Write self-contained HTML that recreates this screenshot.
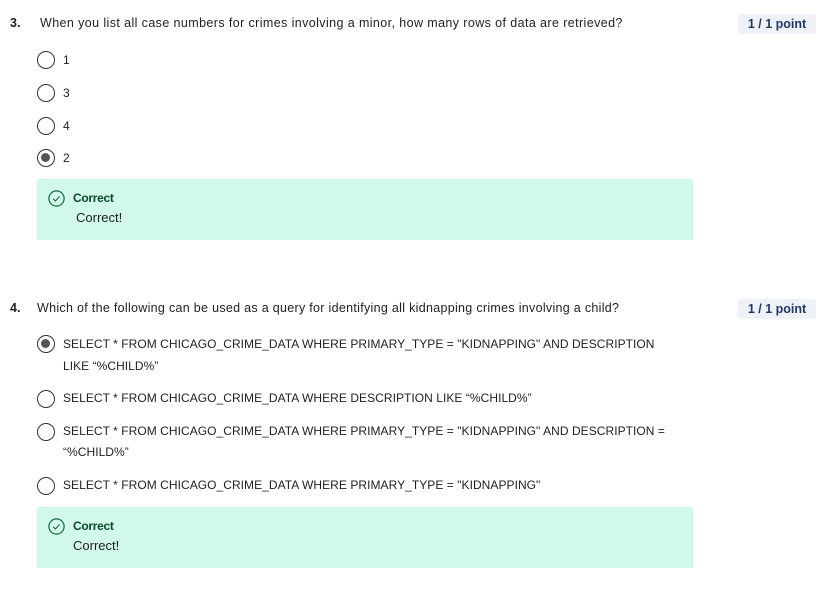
<!DOCTYPE html>
<html><head><meta charset="utf-8"><style>
*{margin:0;padding:0;box-sizing:border-box}
body{width:840px;height:612px;background:#fff;font-family:"Liberation Sans",sans-serif;color:#1f1f1f;position:relative;overflow:hidden}
.a{position:absolute;white-space:nowrap}
.q{font-size:12.5px;letter-spacing:0.4px}
.num{font-weight:bold;font-size:12.5px}
.badge{position:absolute;left:738px;width:78px;height:20px;background:#eef2f8;border-radius:3px;color:#1f3a68;font-size:12.5px;font-weight:bold;text-align:center;line-height:20px}
.r{position:absolute;width:18px;height:18px;border:1.5px solid #333;border-radius:50%}
.r.s::after{content:"";position:absolute;left:3px;top:3px;width:9px;height:9px;border-radius:50%;background:#555}
.opt{font-size:12px;letter-spacing:0.05px}
.fb{position:absolute;left:37px;width:656px;height:61px;background:#d2f7eb}
.ck{position:absolute;left:11px;top:11px;width:17px;height:17px}
.fb .t{position:absolute;left:36px;top:12px;font-size:12px;font-weight:bold;color:#0b4a2b;letter-spacing:-0.3px}
.fb .m{position:absolute;top:31px;font-size:13px;letter-spacing:0px}
</style></head><body>
<div class="a num" style="left:10px;top:16px">3.</div>
<div class="a q" style="left:40px;top:16px">When you list all case numbers for crimes involving a minor, how many rows of data are retrieved?</div>
<div class="badge" style="top:14px">1 / 1 point</div>
<div class="r" style="left:37px;top:51px"></div><div class="a opt" style="left:63px;top:53px">1</div>
<div class="r" style="left:37px;top:84px"></div><div class="a opt" style="left:63px;top:86px">3</div>
<div class="r" style="left:37px;top:117px"></div><div class="a opt" style="left:63px;top:119px">4</div>
<div class="r s" style="left:37px;top:149px"></div><div class="a opt" style="left:63px;top:151px">2</div>
<div class="fb" style="top:179px"><svg class="ck" viewBox="0 0 17 17"><circle cx="8.5" cy="8.5" r="7.6" fill="none" stroke="#0b6b3a" stroke-width="1.2"/><path d="M5.2 8.8l2.2 2.2 4.3-4.6" fill="none" stroke="#0b6b3a" stroke-width="1.1"/></svg><div class="t">Correct</div><div class="m" style="left:39px">Correct!</div></div>

<div class="a num" style="left:10px;top:301px">4.</div>
<div class="a q" style="left:37px;top:301px;letter-spacing:0.3px">Which of the following can be used as a query for identifying all kidnapping crimes involving a child?</div>
<div class="badge" style="top:299px">1 / 1 point</div>
<div class="r s" style="left:37px;top:335px"></div>
<div class="a opt" style="left:63px;top:337px">SELECT * FROM CHICAGO_CRIME_DATA WHERE PRIMARY_TYPE = "KIDNAPPING" AND DESCRIPTION</div>
<div class="a opt" style="left:63px;top:359px">LIKE “%CHILD%”</div>
<div class="r" style="left:37px;top:390px"></div>
<div class="a opt" style="left:63px;top:391px">SELECT * FROM CHICAGO_CRIME_DATA WHERE DESCRIPTION LIKE “%CHILD%”</div>
<div class="r" style="left:37px;top:423px"></div>
<div class="a opt" style="left:63px;top:424px">SELECT * FROM CHICAGO_CRIME_DATA WHERE PRIMARY_TYPE = "KIDNAPPING" AND DESCRIPTION =</div>
<div class="a opt" style="left:63px;top:445px">“%CHILD%”</div>
<div class="r" style="left:37px;top:477px"></div>
<div class="a opt" style="left:63px;top:478px">SELECT * FROM CHICAGO_CRIME_DATA WHERE PRIMARY_TYPE = "KIDNAPPING"</div>
<div class="fb" style="top:507px"><svg class="ck" viewBox="0 0 17 17"><circle cx="8.5" cy="8.5" r="7.6" fill="none" stroke="#0b6b3a" stroke-width="1.2"/><path d="M5.2 8.8l2.2 2.2 4.3-4.6" fill="none" stroke="#0b6b3a" stroke-width="1.1"/></svg><div class="t">Correct</div><div class="m" style="left:36px">Correct!</div></div>
</body></html>
